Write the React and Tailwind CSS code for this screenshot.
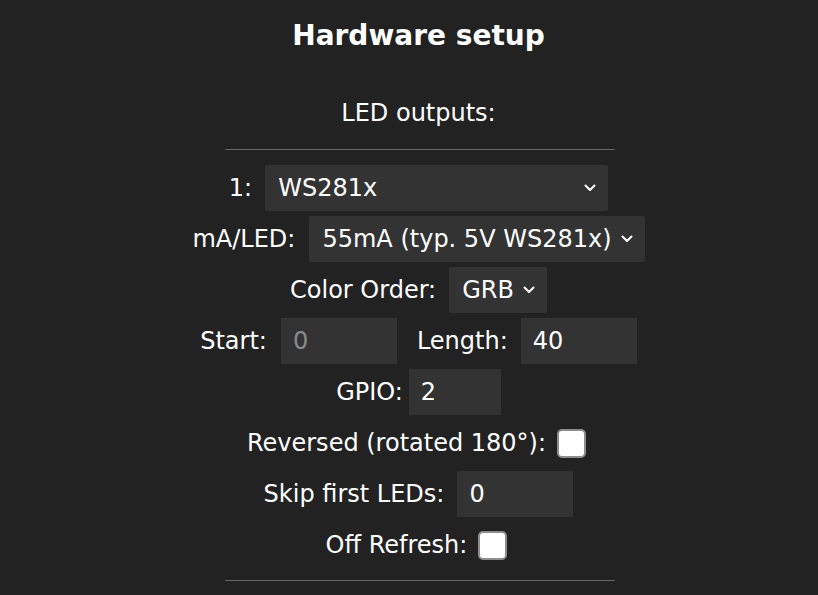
import React from "react";

const font = { fontFamily: '"DejaVu Sans", Verdana, sans-serif' };

function Chevron() {
  return (
    <svg width="12" height="8" viewBox="0 0 12 8" className="shrink-0">
      <polyline points="1.5,1.5 6,6 10.5,1.5" fill="none" stroke="#fff" strokeWidth="2" strokeLinecap="round" strokeLinejoin="round" />
    </svg>
  );
}

function Select({ value, w, className = "" }) {
  return (
    <div className={`h-[46px] bg-[#333] rounded-[2px] flex items-center pl-[13px] pr-[12px] ${className}`} style={w ? { width: w } : undefined}>
      <span className="flex-1 whitespace-nowrap">{value}</span>
      <span className="ml-[9px]"><Chevron /></span>
    </div>
  );
}

function Input({ value, w = 116, disabled = false, className = "" }) {
  return (
    <div className={`h-[46px] bg-[#333] flex items-center pl-[12px] ${disabled ? "text-[#8a8a8a]" : "text-white"} ${className}`} style={{ width: w }}>
      {value}
    </div>
  );
}

function Check({ className = "" }) {
  return <div className={`w-[29px] h-[29px] bg-white rounded-[5px] border-2 border-[#8d8d8d] ${className}`} />;
}

export default function App() {
  return (
    <div className="min-h-[595px] bg-[#222] text-white text-[24px] pl-[19px] overflow-hidden" style={font}>
      <div className="flex flex-col items-center">
        <div className="h-[72px] flex items-center text-[28px] font-bold leading-none">Hardware setup</div>
        <div className="mt-[21px] h-[40px] flex items-center leading-none">LED outputs:</div>
        <div className="mt-[16px] w-[390px] h-px bg-[#666] ml-[2px]" />
        <div className="mt-[15px] flex flex-col gap-[5px] leading-none">
          <div className="h-[46px] flex justify-center items-center">
            <span>1:</span>
            <Select value="WS281x" w={343} className="ml-[13px]" />
          </div>
          <div className="h-[46px] flex justify-center items-center">
            <span>mA/LED:</span>
            <Select value="55mA (typ. 5V WS281x)" className="ml-[14px]" />
          </div>
          <div className="h-[46px] flex justify-center items-center">
            <span>Color Order:</span>
            <Select value="GRB" className="ml-[13px]" />
          </div>
          <div className="h-[46px] flex justify-center items-center">
            <span>Start:</span>
            <Input value="0" disabled className="ml-[14px]" />
            <span className="ml-[20px]">Length:</span>
            <Input value="40" className="ml-[13px]" />
          </div>
          <div className="h-[46px] flex justify-center items-center">
            <span>GPIO:</span>
            <Input value="2" w={92} className="ml-[6px]" />
          </div>
          <div className="h-[46px] flex justify-center items-center pr-[4px]">
            <span>Reversed (rotated 180°):</span>
            <Check className="ml-[11px]" />
          </div>
          <div className="h-[46px] flex justify-center items-center">
            <span>Skip first LEDs:</span>
            <Input value="0" className="ml-[13px]" />
          </div>
          <div className="h-[46px] flex justify-center items-center pr-[4px]">
            <span>Off Refresh:</span>
            <Check className="ml-[11px]" />
          </div>
        </div>
        <div className="mt-[12px] w-[390px] h-px bg-[#666] ml-[2px]" />
      </div>
    </div>
  );
}
